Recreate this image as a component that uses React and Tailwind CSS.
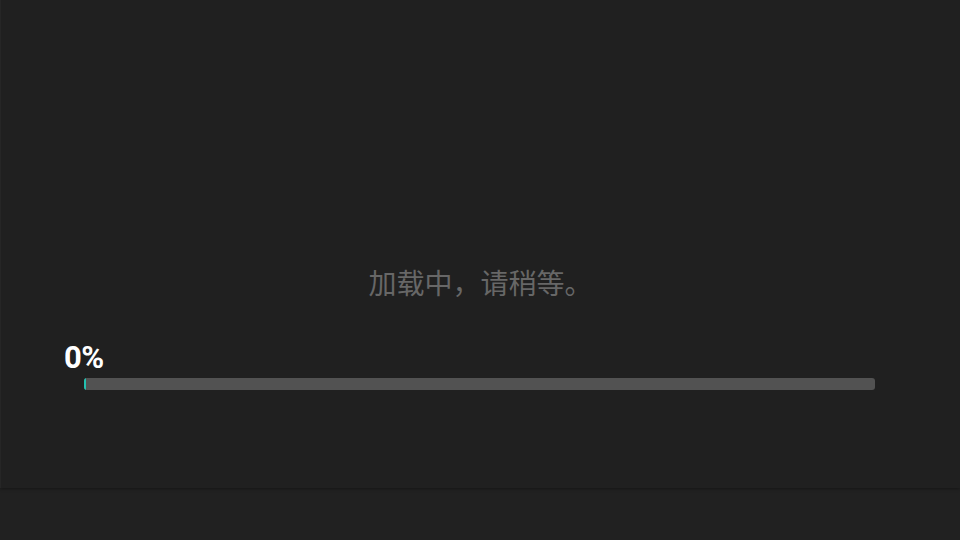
export default function App() {
  const progress = 0;

  return (
    <div className="w-[960px] h-[540px] bg-[#212121] overflow-hidden">
      <div className="h-[488px] bg-[#202020] border-l border-[#262626] shadow-[0_1px_3px_rgba(0,0,0,0.35)] flex flex-col">
        <div
          className="pt-[264px] text-center text-[28px] leading-[36px] text-[#676767]"
          style={{ fontFamily: '"Noto Sans CJK SC", "Noto Sans", sans-serif' }}
        >
          加载中，请稍等。
        </div>
        <div className="mt-[42px] pl-[63px]">
          <div
            className="text-[31px] leading-[31px] font-bold text-white tracking-[-0.5px]"
            style={{ fontFamily: 'Roboto, "DejaVu Sans", sans-serif' }}
          >
            {progress}%
          </div>
        </div>
        <div className="mt-[5px] ml-[83px] mr-[85px] h-[12px] rounded-[3px] bg-[#525252] flex overflow-hidden">
          <div className="w-[2px] h-full bg-[#22c1b0]" />
        </div>
      </div>
    </div>
  );
}
